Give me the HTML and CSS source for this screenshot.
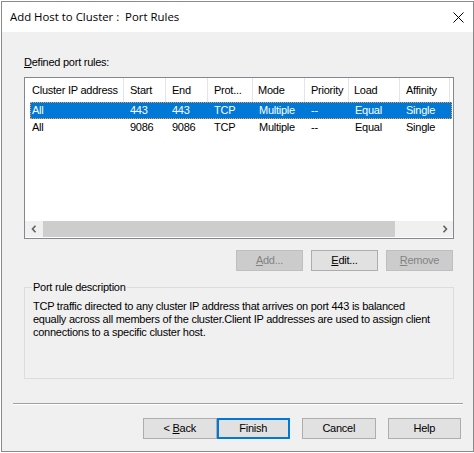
FILE: index.html
```html
<!DOCTYPE html>
<html>
<head>
<meta charset="utf-8">
<link rel="stylesheet" href="styles.css">
</head>
<body>
<div class="window">
  <div class="titlebar">
    <span class="title">Add Host to Cluster :&nbsp; Port Rules</span>
    <svg class="close" width="11" height="11" viewBox="0 0 11 11"><path d="M0.5 0.5 L10.5 10.5 M10.5 0.5 L0.5 10.5" stroke="#000" stroke-width="1" fill="none"/></svg>
  </div>
  <div class="client">
    <div class="caption"><u>D</u>efined port rules:</div>
    <div class="listview">
      <div class="lv-header">
        <div class="hc c1">Cluster IP address</div>
        <div class="hc c2">Start</div>
        <div class="hc c3">End</div>
        <div class="hc c4">Prot...</div>
        <div class="hc c5">Mode</div>
        <div class="hc c6">Priority</div>
        <div class="hc c7">Load</div>
        <div class="hc c8">Affinity</div>
      </div>
      <div class="lv-row selected">
        <div class="rc r1">All</div>
        <div class="rc c2">443</div>
        <div class="rc c3">443</div>
        <div class="rc c4">TCP</div>
        <div class="rc c5">Multiple</div>
        <div class="rc c6">--</div>
        <div class="rc c7">Equal</div>
        <div class="rc c8">Single</div>
      </div>
      <div class="lv-row">
        <div class="rc r1">All</div>
        <div class="rc c2">9086</div>
        <div class="rc c3">9086</div>
        <div class="rc c4">TCP</div>
        <div class="rc c5">Multiple</div>
        <div class="rc c6">--</div>
        <div class="rc c7">Equal</div>
        <div class="rc c8">Single</div>
      </div>
      <div class="lv-fill"></div>
      <div class="hscroll">
        <div class="sb-arrow"><svg width="6" height="8" viewBox="0 0 6 8"><path d="M4.5 0.8 L1.5 4 L4.5 7.2" stroke="#606060" stroke-width="1.6" fill="none"/></svg></div>
        <div class="sb-thumb"></div>
        <div class="sb-track"></div>
        <div class="sb-arrow"><svg width="6" height="8" viewBox="0 0 6 8"><path d="M1.5 0.8 L4.5 4 L1.5 7.2" stroke="#606060" stroke-width="1.6" fill="none"/></svg></div>
      </div>
    </div>
    <div class="btnrow">
      <div class="btn disabled"><span><u>A</u>dd...</span></div>
      <div class="btn"><span><u>E</u>dit...</span></div>
      <div class="btn disabled"><span><u>R</u>emove</span></div>
    </div>
    <fieldset class="group">
      <legend>Port rule description</legend>
      <p class="desc">TCP traffic directed to any cluster IP address that arrives on port 443 is balanced<br>equally across all members of the cluster.Client IP addresses are used to assign client<br>connections to a specific cluster host.</p>
    </fieldset>
    <div class="separator"></div>
    <div class="footer">
      <div class="btn wide"><span>&lt; <u>B</u>ack</span></div>
      <div class="btn wide default"><span>Finish</span></div>
      <div class="btn wide"><span>Cancel</span></div>
      <div class="btn wide"><span>Help</span></div>
    </div>
  </div>
</div>
</body>
</html>
```

FILE: styles.css
```css
html, body {
  margin: 0;
  padding: 0;
  background: #ffffff;
}
body {
  font-family: "Liberation Sans", Arial, sans-serif;
  font-size: 11px;
  letter-spacing: -0.25px;
  color: #000;
}
.window {
  margin: 1px 0 0 1px;
  width: 473px;
  height: 451px;
  box-sizing: border-box;
  border: 1px solid #8a8a8a;
  background: #f0f0f0;
  display: flex;
  flex-direction: column;
}
.titlebar {
  height: 30px;
  flex: none;
  background: #ffffff;
  display: flex;
  align-items: center;
  padding-left: 8px;
}
.title {
  font-family: "Open Sans", "Liberation Sans", sans-serif;
  font-size: 11.4px;
  letter-spacing: 0;
  color: #000;
  padding-bottom: 1px;
}
.close {
  margin-left: auto;
  margin-right: 9px;
  margin-top: 1px;
}
.client {
  flex: 1;
  display: flex;
  flex-direction: column;
  padding-left: 22px;
}
.caption {
  margin-top: 24px;
  line-height: 13px;
  height: 13px;
}
.listview {
  margin-top: 8px;
  width: 430px;
  height: 162px;
  box-sizing: border-box;
  border: 1px solid #828790;
  background: #ffffff;
  display: flex;
  flex-direction: column;
}
.lv-header {
  height: 24px;
  display: flex;
  flex: none;
}
.hc {
  box-sizing: border-box;
  border-right: 1px solid #e5e5e5;
  line-height: 24px;
  padding-left: 6px;
  white-space: nowrap;
  overflow: hidden;
}
.hc.c1 { width: 99px; padding-left: 7px; }
.c2 { width: 42px; }
.c3 { width: 42px; }
.c4 { width: 45px; }
.c5 { width: 52px; padding-left: 5px; }
.c6 { width: 44px; }
.c7 { width: 51px; padding-left: 5px; }
.c8 { width: 50px; }
.lv-row {
  margin-left: 5px;
  width: 422px;
  height: 17px;
  box-sizing: border-box;
  display: flex;
  flex: none;
  line-height: 15px;
  border: 1px solid transparent;
}
.lv-row.selected {
  background: #0078d7;
  color: #ffffff;
  border: 1px dotted #ff9a40;
}
.rc {
  box-sizing: border-box;
  padding-left: 6px;
  white-space: nowrap;
}
.rc.r1 { width: 93px; padding-left: 1px; }
.rc.c2 { width: 42px; }
.lv-fill { flex: 1; }
.hscroll {
  height: 16px;
  margin-bottom: 1px;
  display: flex;
  flex: none;
  background: #f0f0f0;
}
.sb-arrow {
  width: 17px;
  display: flex;
  align-items: center;
  justify-content: center;
}
.sb-thumb {
  margin-left: 1px;
  width: 352px;
  background: #cdcdcd;
}
.sb-track { flex: 1; }
.btnrow {
  margin-top: 11px;
  width: 429px;
  display: flex;
  justify-content: flex-end;
  gap: 8px;
}
.btn {
  width: 67px;
  height: 21px;
  box-sizing: border-box;
  border: 1px solid #adadad;
  background: #e1e1e1;
  display: flex;
  align-items: center;
  justify-content: center;
  line-height: 13px;
  white-space: pre;
}
.btn.disabled {
  background: #cccccc;
  border-color: #bfbfbf;
  color: #838383;
}
.group {
  margin: 10px 0 0 0;
  width: 430px;
  height: 98px;
  box-sizing: border-box;
  border: 1px solid #dcdcdc;
  padding: 0 4px 0 7px;
}
.group legend {
  padding: 0 1px;
  line-height: 13px;
}
.desc {
  margin: 6px 0 0 1px;
  line-height: 13px;
  white-space: nowrap;
}
.separator {
  margin-top: 24px;
  margin-left: -11px;
  width: 450px;
  height: 1px;
  background: #a0a0a0;
  border-bottom: 1px solid #ffffff;
}
.footer {
  margin-top: 13px;
  margin-left: 119px;
  display: flex;
}
.btn.wide {
  width: 74px;
  margin-right: 12px;
}
.btn.wide:first-child { margin-right: 0; }
.btn.default {
  border: 2px solid #0078d7;
}
```
